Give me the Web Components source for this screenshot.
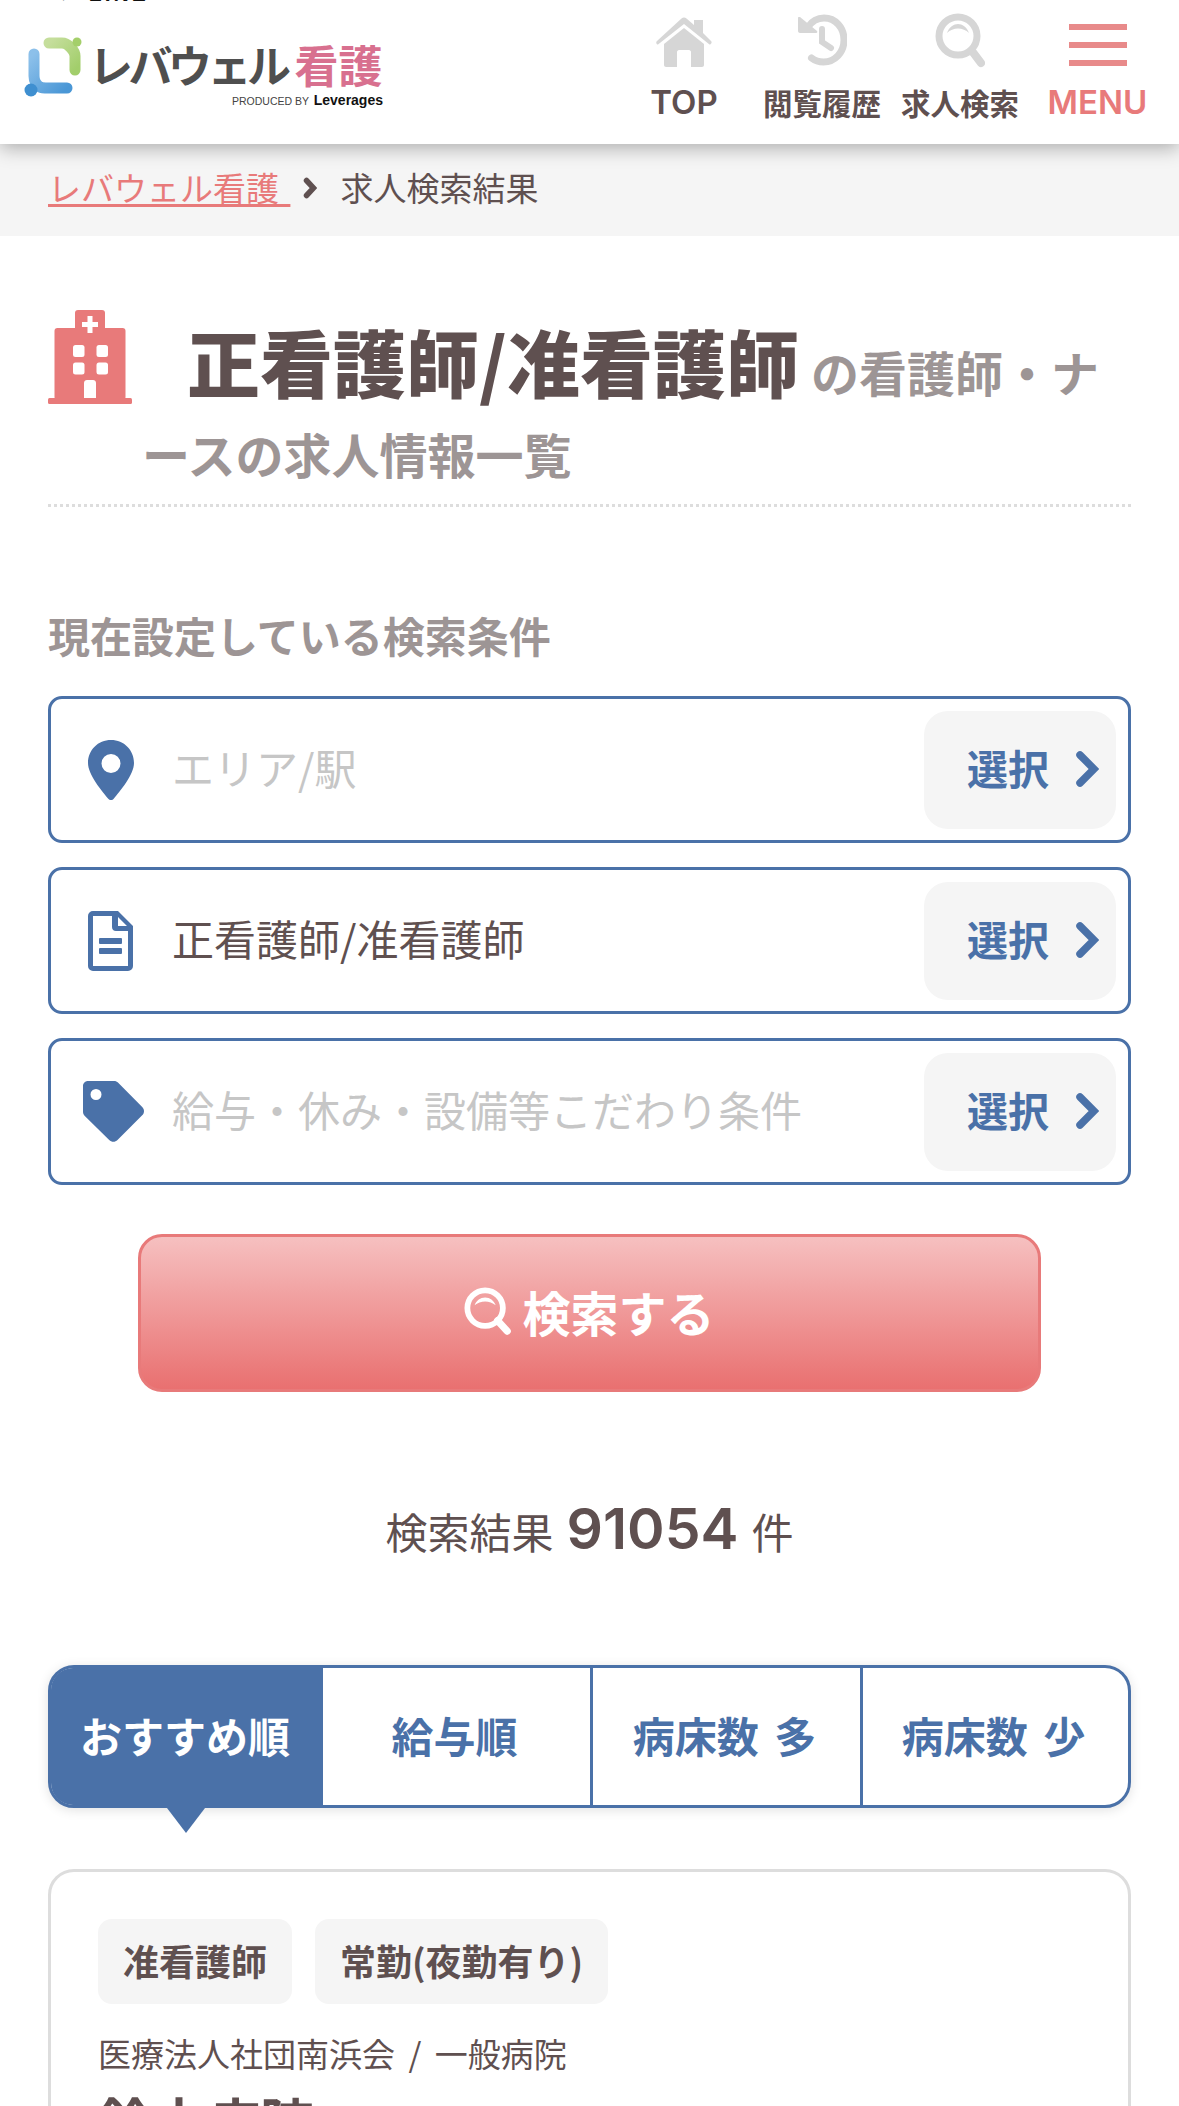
<!DOCTYPE html>
<html lang="ja">
<head>
<meta charset="utf-8">
<title>求人検索結果</title>
<style>
  html, body { margin: 0; padding: 0; background: #fff; }
  body {
    width: 1179px;
    height: 2106px;
    overflow: hidden;
    color: #5f5050;
    font-family: "Noto Sans CJK JP", "Liberation Sans", sans-serif;
  }
</style>
</head>
<body>
<site-header></site-header>
<bread-crumb></bread-crumb>
<page-title></page-title>
<search-form></search-form>
<result-count></result-count>
<sort-tabs></sort-tabs>
<job-card></job-card>

<script>
const BLUE = '#4a71a8';

const ICONS = {
  home: `<svg viewBox="0 0 56 50" width="58" height="50" style="margin-top:3px"><path fill="#d6d6d6" d="M38 3h9v13l8 8c1.500 1.500 0 3.500-1.500 3.500L28 7 2 27.500C.5 27.500-.5 25.500 1 24L25.500 1.500c1.500-1.300 3.500-1.300 5 0L38 8z"/><path fill="#d6d6d6" d="M28 11 48 27v21c0 1-1 2-2 2H35V35c0-1-1-2-2-2H23c-1 0-2 1-2 2v15H10c-1 0-2-1-2-2V27z"/></svg>`,
  history: `<svg viewBox="0 0 50 52" width="50" height="52"><path fill="none" stroke="#d6d6d6" stroke-width="7" stroke-linecap="round" d="M11 13C15 7 21 4 27 4c11.500 0 20 9.500 20 22s-9 22-20.500 22c-4.500 0-8.500-1.300-12-4"/><path fill="#d6d6d6" d="M2 3l1 0 17 14c.7.8.3 2-.8 2H3c-1 0-2-1-2-2V4c0-.8.400-1 1-1z"/><path fill="none" stroke="#d6d6d6" stroke-width="6" stroke-linecap="round" d="M25 15v13l9 6"/></svg>`,
  search: `<svg viewBox="0 0 50 56" width="50" height="56" style="margin-top:-2px"><circle cx="23" cy="24" r="19" fill="none" stroke="#d6d6d6" stroke-width="7"/><path stroke="#d6d6d6" stroke-width="8" stroke-linecap="round" d="M37 39l9 12"/><path fill="#d6d6d6" d="M12 21c2-6 7-9 11-9s9 3 11 9c-3-3-7-4.500-11-4.500S15 18 12 21z"/></svg>`,
  searchWhite: `<svg viewBox="0 0 50 50" width="48" height="48"><circle cx="22" cy="22" r="18.500" fill="none" stroke="#fff" stroke-width="6"/><path stroke="#fff" stroke-width="7.500" stroke-linecap="round" d="M35 35l10 11"/><path fill="#fff" d="M11 19c2-5 6-8 11-8s9 3 11 8c-3-2.500-7-4-11-4s-8 1.500-11 4z"/></svg>`,
  pin: `<svg viewBox="0 0 46 60" width="46" height="60"><path fill="${BLUE}" fill-rule="evenodd" d="M23 0C10 0 0 10 0 23c0 12 14 28 20.500 36 1.300 1.400 3.700 1.400 5 0C32 51 46 35 46 23 46 10 36 0 23 0zm0 14a9.500 9.500 0 1 1 0 19 9.500 9.500 0 0 1 0-19z"/></svg>`,
  doc: `<svg viewBox="0 0 45 60" width="45" height="60"><path fill="${BLUE}" fill-rule="evenodd" d="M5 0H30L45 15V55a5 5 0 0 1-5 5H5a5 5 0 0 1-5-5V5a5 5 0 0 1 5-5zM5 5V55H40V20H28c-2.400 0-4-1.600-4-4V5zM30 6v9h9z"/><rect x="11" y="27" width="23" height="6" rx="1" fill="${BLUE}"/><rect x="11" y="37" width="23" height="6" rx="1" fill="${BLUE}"/></svg>`,
  tag: `<svg viewBox="0 0 61 61" width="61" height="61" style="margin-left:5px"><path fill="${BLUE}" fill-rule="evenodd" d="M5 0h26c1.600 0 3.100.6 4.200 1.800l24 24.200c2.400 2.300 2.400 6 0 8.300L34.500 59c-2.300 2.400-6 2.400-8.300 0L1.800 35C.6 33.800 0 32.300 0 30.700V5c0-2.800 2.200-5 5-5zm8 8a5.500 5.500 0 1 0 0 11 5.500 5.500 0 0 0 0-11z"/></svg>`,
  chevron: `<svg viewBox="0 0 24 36" width="24" height="36"><path fill="none" stroke="${BLUE}" stroke-width="7.500" stroke-linecap="round" d="M5 4l14 14L5 32"/></svg>`,
  hospital: `<svg viewBox="0 0 84 94" width="84" height="94"><g fill="#e87a7a"><rect x="27" width="30" height="30" rx="3"/><rect x="6.500" y="18" width="71" height="72" rx="3"/><rect y="88" width="84" height="6" rx="1.500"/></g><g fill="#fff"><path d="M39.500 6h5v6h5.500v5h-5.500v6h-5v-6H34v-5h5.500z"/><rect x="25" y="35" width="11.500" height="12" rx="2.500"/><rect x="48.500" y="35" width="11.500" height="12" rx="2.500"/><rect x="25" y="52.500" width="11.500" height="12" rx="2.500"/><rect x="48.500" y="52.500" width="11.500" height="12" rx="2.500"/><path d="M36 73c0-1.700 1.300-3 3-3h6c1.700 0 3 1.300 3 3v15H36z"/></g></svg>`,
  logo: `<svg viewBox="0 0 60 62" width="60" height="62"><defs><linearGradient id="b" x1="0" y1="0" x2="1" y2="1"><stop offset="0" stop-color="#8cc0ea"/><stop offset="1" stop-color="#4a97d6"/></linearGradient><linearGradient id="g" x1="0" y1="0" x2="1" y2="1"><stop offset="0" stop-color="#c5de9c"/><stop offset="1" stop-color="#a2ce6b"/></linearGradient></defs><path fill="none" stroke="url(#g)" stroke-width="11" stroke-linecap="round" d="M25 7h13c5 0 7 3 9 5 2 2 4 4 4 8v14"/><circle cx="53" cy="6" r="4.500" fill="#a4cf6a"/><path fill="none" stroke="url(#b)" stroke-width="11" stroke-linecap="round" d="M10 18v22c0 6 3 9 6 11 2 1 5 1 8 1h19"/><circle cx="7" cy="54" r="6.500" fill="#3f8fd0"/></svg>`
};

class SiteHeader extends HTMLElement {
  constructor() {
    super();
    this.attachShadow({ mode: 'open' });
    const items = [
      ['TOP', ICONS.home, 'latin'],
      ['閲覧履歴', ICONS.history, ''],
      ['求人検索', ICONS.search, ''],
    ];
    this.shadowRoot.innerHTML = `
      <style>
        :host { display: block; position: relative; z-index: 2; height: 144px; background: #fff; box-shadow: 0 4px 18px rgba(0,0,0,.3); }
        .bar { display: flex; justify-content: space-between; height: 144px; overflow: hidden; }
        .clip { position: absolute; left: 56px; top: -18px; font: 700 21px "Liberation Sans", sans-serif; color: #111; letter-spacing: 3px; }
        .logo { display: flex; gap: 5px; padding: 36px 0 0 24px; }
        .words { display: flex; flex-direction: column; width: 294px; }
        .name { font: 700 44px/48px "Noto Sans CJK JP", sans-serif; color: #4f4f4f; letter-spacing: -4.500px; white-space: nowrap; margin-top: 4px; }
        .name b { color: #d8708f; font-weight: 700; margin-left: 8px; letter-spacing: 0; }
        .by { font: 400 10.500px/12px "Liberation Sans", sans-serif; color: #444; text-align: right; margin-top: 6px; }
        .by b { font-size: 14px; color: #111; margin-left: 2px; }
        nav { display: flex; }
        .item { display: flex; flex-direction: column; align-items: center; width: 138px; padding-top: 14px; box-sizing: border-box; font-size: 29.500px; font-weight: 700; line-height: 36px; white-space: nowrap; }
        .item .ic { height: 70px; display: flex; align-items: flex-start; justify-content: center; }
        .latin { font-family: Inter, "Liberation Sans", sans-serif; font-size: 33px; font-weight: 600; }
        .menu { color: #e87a7a; width: 137px; margin-right: 13px; }
        .burger { width: 58px; height: 42px; margin-top: 10px; display: flex; flex-direction: column; justify-content: space-between; }
        .burger i { display: block; height: 6px; background: #e88a8a; }
      </style>
      <div class="clip">✓ LINE</div>
      <div class="bar">
        <div class="logo">
          ${ICONS.logo}
          <div class="words">
            <div class="name">レバウェル<b>看護</b></div>
            <div class="by">PRODUCED BY <b>Leverages</b></div>
          </div>
        </div>
        <nav>
          ${items.map(i => `<div class="item ${i[2]}"><div class="ic">${i[1]}</div>${i[0]}</div>`).join('')}
          <div class="item menu latin"><div class="ic"><div class="burger"><i></i><i></i><i></i></div></div>MENU</div>
        </nav>
      </div>`;
  }
}

class BreadCrumb extends HTMLElement {
  constructor() {
    super();
    this.attachShadow({ mode: 'open' });
    this.shadowRoot.innerHTML = `
      <style>
        :host { display: flex; align-items: center; height: 92px; box-sizing: border-box; padding: 0 0 6px 48px; background: #f5f5f5; font-size: 33px; line-height: 44px; }
        a { color: #e87a7a; text-decoration: underline; text-underline-offset: 3px; text-decoration-thickness: 3px; white-space: pre; word-spacing: 4px; }
        svg { margin: 2px 23px 0 13px; }
      </style>
      <a>レバウェル看護 </a>
      <svg viewBox="0 0 14 22" width="14" height="22"><path fill="none" stroke="#5f5050" stroke-width="5.500" stroke-linecap="round" d="M3.500 3.500l7 7.500-7 7.500"/></svg>
      <span>求人検索結果</span>`;
  }
}

class PageTitle extends HTMLElement {
  constructor() {
    super();
    this.attachShadow({ mode: 'open' });
    this.shadowRoot.innerHTML = `
      <style>
        :host { display: block; position: relative; margin: 0 48px; padding: 83px 0 0 94px; height: 185px; border-bottom: 3px dotted #ddd; }
        .ic { position: absolute; left: 0; top: 74px; }
        h1 { margin: 0; font-size: 48px; font-weight: 700; line-height: 82px; color: #9d9595; text-indent: 45px; width: 965px; }
        h1 strong { font-size: 73px; color: #5f5050; margin-right: 12px; }
      </style>
      <div class="ic">${ICONS.hospital}</div>
      <h1><strong>正看護師/准看護師</strong>の看護師・ナースの求人情報一覧</h1>`;
  }
}

class SearchField extends HTMLElement {
  connectedCallback() {
    if (this.shadowRoot) return;
    this.attachShadow({ mode: 'open' });
    const color = this.hasAttribute('empty') ? '#c6c6c6' : '#5f5050';
    this.shadowRoot.innerHTML = `
      <style>
        :host { display: flex; align-items: center; height: 147px; box-sizing: border-box; border: 3px solid ${BLUE}; border-radius: 14px; padding: 0 12px 0 0; background: #fff; }
        .ic { width: 119px; margin-right: 2px; display: flex; justify-content: center; }
        .label { flex: 1; font-size: 42px; color: ${color}; white-space: nowrap; padding-bottom: 6px; }
        .btn { display: flex; align-items: center; width: 192px; height: 118px; box-sizing: border-box; padding-left: 43px; background: #f5f5f5; border-radius: 24px; color: ${BLUE}; font-size: 41px; font-weight: 700; gap: 26px; }
        .btn span { padding-bottom: 5px; }
        .btn svg { margin-bottom: 2px; }
      </style>
      <div class="ic">${ICONS[this.getAttribute('icon')]}</div>
      <div class="label"><slot></slot></div>
      <div class="btn"><span>選択</span>${ICONS.chevron}</div>`;
  }
}

class SearchForm extends HTMLElement {
  constructor() {
    super();
    this.attachShadow({ mode: 'open' });
    this.shadowRoot.innerHTML = `
      <style>
        :host { display: block; margin: 0 48px; padding-top: 104px; }
        h2 { margin: 0 0 37px; font-size: 42px; line-height: 48px; color: #9d9595; font-weight: 700; }
        .fields { display: flex; flex-direction: column; gap: 24px; }
        .go { display: flex; align-items: center; justify-content: center; gap: 10px; width: 903px; height: 158px; box-sizing: border-box; margin: 49px auto 0; border: 3px solid #e87a7a; border-radius: 24px; background: linear-gradient(#f6c0c0, #e97070); color: #fff; font-size: 48px; font-weight: 700; }
        .go span { padding-bottom: 4px; }
        .go svg { margin-bottom: 4px; }
      </style>
      <h2>現在設定している検索条件</h2>
      <div class="fields">
        <search-field icon="pin" empty>エリア/駅</search-field>
        <search-field icon="doc">正看護師/准看護師</search-field>
        <search-field icon="tag" empty>給与・休み・設備等こだわり条件</search-field>
      </div>
      <div class="go">${ICONS.searchWhite}<span>検索する</span></div>`;
  }
}

class ResultCount extends HTMLElement {
  constructor() {
    super();
    this.attachShadow({ mode: 'open' });
    this.shadowRoot.innerHTML = `
      <style>
        :host { display: flex; justify-content: center; align-items: baseline; gap: 13px; margin-top: 97px; height: 80px; line-height: 80px; font-size: 42px; }
        b { font: 600 57px/80px Inter, "Liberation Sans", sans-serif; }
      </style>
      <span>検索結果</span><b>91054</b><span>件</span>`;
  }
}

class SortTabs extends HTMLElement {
  constructor() {
    super();
    this.attachShadow({ mode: 'open' });
    const tabs = ['おすすめ順', '給与順', '病床数 多', '病床数 少'];
    this.shadowRoot.innerHTML = `
      <style>
        :host { display: block; position: relative; margin: 96px 48px 0; }
        .tabs { display: grid; grid-template-columns: 272px 267px 270px 1fr; height: 143px; box-sizing: border-box; border: 3px solid ${BLUE}; border-radius: 26px; background: #fff; box-shadow: 0 2px 12px rgba(0,0,0,.12); }
        .tab { display: flex; align-items: center; justify-content: center; padding: 0 4px 4px 0; color: ${BLUE}; font-size: 42px; font-weight: 700; white-space: pre; word-spacing: 6px; border-left: 3px solid ${BLUE}; }
        .tab:first-child { border-left: 0; background: ${BLUE}; color: #fff; border-radius: 22px 0 0 22px; }
        .tab:nth-child(2) { border-left: 0; }
        .tri { position: absolute; left: 119px; top: 143px; width: 0; height: 0; border-left: 19px solid transparent; border-right: 19px solid transparent; border-top: 25px solid ${BLUE}; }
      </style>
      <div class="tabs">${tabs.map(t => `<div class="tab">${t}</div>`).join('')}</div>
      <div class="tri"></div>`;
  }
}

class JobCard extends HTMLElement {
  constructor() {
    super();
    this.attachShadow({ mode: 'open' });
    this.shadowRoot.innerHTML = `
      <style>
        :host { display: block; margin: 61px 48px 0; height: 400px; box-sizing: border-box; border: 3px solid #ddd; border-radius: 26px; padding: 47px 47px 0; background: #fff; }
        .tags { display: flex; gap: 23px; }
        .tag { display: flex; align-items: center; height: 85px; box-sizing: border-box; padding: 0 25px 4px; background: #f5f5f5; border-radius: 14px; font-size: 36px; font-weight: 700; }
        .org { margin-top: 28px; font-size: 33px; line-height: 42px; white-space: pre; word-spacing: 6px; }
        h3 { margin: 12px 0 0; font-size: 54px; line-height: 70px; font-weight: 700; }
      </style>
      <div class="tags"><div class="tag">准看護師</div><div class="tag">常勤(夜勤有り)</div></div>
      <div class="org">医療法人社団南浜会 / 一般病院</div>
      <h3>鈴木病院</h3>`;
  }
}

customElements.define('site-header', SiteHeader);
customElements.define('bread-crumb', BreadCrumb);
customElements.define('page-title', PageTitle);
customElements.define('search-field', SearchField);
customElements.define('search-form', SearchForm);
customElements.define('result-count', ResultCount);
customElements.define('sort-tabs', SortTabs);
customElements.define('job-card', JobCard);
</script>
</body>
</html>
